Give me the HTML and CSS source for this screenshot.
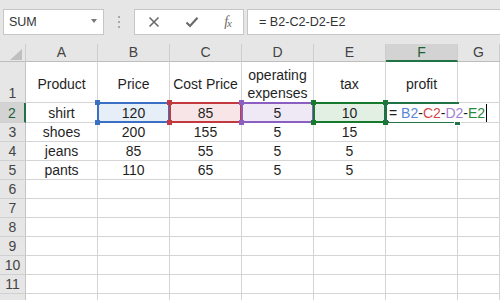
FILE: index.html
```html
<!DOCTYPE html>
<html>
<head>
<meta charset="utf-8">
<link rel="stylesheet" href="styles.css">
</head>
<body>
<div class="toolbar">
  <div class="namebox"><span>SUM</span><span class="caret"></span></div>
  <div class="grip"><i></i><i></i><i></i></div>
  <div class="fxbox">
    <svg class="ico" width="12" height="12" viewBox="0 0 12 12"><path d="M1.5 1.5L10.5 10.5M10.5 1.5L1.5 10.5" stroke="#6b6b6b" stroke-width="1.6" fill="none"/></svg>
    <svg class="ico" width="14" height="12" viewBox="0 0 14 12"><path d="M1.5 6.5L5 10L12.5 1.8" stroke="#6b6b6b" stroke-width="2.2" fill="none"/></svg>
    <span class="fx">f<span class="fxx">x</span></span>
  </div>
  <div class="formula">= B2-C2-D2-E2</div>
</div>
<div class="sheet">
  <div class="hd corner"><span class="tri"></span></div>
  <div class="hd col">A</div>
  <div class="hd col">B</div>
  <div class="hd col">C</div>
  <div class="hd col">D</div>
  <div class="hd col">E</div>
  <div class="hd col on">F</div>
  <div class="hd col">G</div>

  <div class="rh">1</div>
  <div class="c r1">Product</div>
  <div class="c r1">Price</div>
  <div class="c r1">Cost Price</div>
  <div class="c r1 wrap">operating expenses</div>
  <div class="c r1">tax</div>
  <div class="c r1">profit</div>
  <div class="c"></div>

  <div class="rh on">2</div>
  <div class="c">shirt</div>
  <div class="c ref blue">120<span class="sel"><i class="tl"></i><i class="tr"></i><i class="bl"></i><i class="br"></i></span></div>
  <div class="c ref red">85<span class="sel"><i class="tl"></i><i class="tr"></i><i class="bl"></i><i class="br"></i></span></div>
  <div class="c ref purple">5<span class="sel"><i class="tl"></i><i class="tr"></i><i class="bl"></i><i class="br"></i></span></div>
  <div class="c ref green">10<span class="sel"><i class="tl"></i><i class="tr"></i><i class="bl"></i><i class="br"></i></span></div>
  <div class="c act"><span class="abox"><i class="fh"></i></span><span class="edit">=&nbsp;<b class="fb">B2</b>-<b class="fc">C2</b>-<b class="fd">D2</b>-<b class="fe">E2</b></span></div>
  <div class="c"></div>

  <div class="rh">3</div>
  <div class="c">shoes</div><div class="c">200</div><div class="c">155</div><div class="c">5</div><div class="c">15</div><div class="c"></div><div class="c"></div>

  <div class="rh">4</div>
  <div class="c">jeans</div><div class="c">85</div><div class="c">55</div><div class="c">5</div><div class="c">5</div><div class="c"></div><div class="c"></div>

  <div class="rh">5</div>
  <div class="c">pants</div><div class="c">110</div><div class="c">65</div><div class="c">5</div><div class="c">5</div><div class="c"></div><div class="c"></div>

  <div class="rh">6</div>
  <div class="c"></div><div class="c"></div><div class="c"></div><div class="c"></div><div class="c"></div><div class="c"></div><div class="c"></div>
  <div class="rh">7</div>
  <div class="c"></div><div class="c"></div><div class="c"></div><div class="c"></div><div class="c"></div><div class="c"></div><div class="c"></div>
  <div class="rh">8</div>
  <div class="c"></div><div class="c"></div><div class="c"></div><div class="c"></div><div class="c"></div><div class="c"></div><div class="c"></div>
  <div class="rh">9</div>
  <div class="c"></div><div class="c"></div><div class="c"></div><div class="c"></div><div class="c"></div><div class="c"></div><div class="c"></div>
  <div class="rh">10</div>
  <div class="c"></div><div class="c"></div><div class="c"></div><div class="c"></div><div class="c"></div><div class="c"></div><div class="c"></div>
  <div class="rh">11</div>
  <div class="c"></div><div class="c"></div><div class="c"></div><div class="c"></div><div class="c"></div><div class="c"></div><div class="c"></div>
  <div class="rh"></div>
  <div class="c"></div><div class="c"></div><div class="c"></div><div class="c"></div><div class="c"></div><div class="c"></div><div class="c"></div>
</div>
</body>
</html>
```
FILE: styles.css
```css
* { box-sizing: border-box; }
html, body { margin: 0; padding: 0; }
body {
  width: 500px; height: 300px; overflow: hidden;
  font-family: "Liberation Sans", Arial, sans-serif;
  background: #fff; color: #1f1f1f;
}
.toolbar {
  height: 44px; background: #e6e6e6;
  display: flex; align-items: flex-start;
  padding: 9px 0 0 3px;
}
.namebox {
  width: 101px; height: 26px; background: #fff;
  border: 1px solid #c6c6c6;
  display: flex; align-items: center; justify-content: space-between;
  padding: 0 6px 0 5px;
  font-size: 12.5px; color: #333;
}
.caret {
  width: 0; height: 0;
  border-left: 3.5px solid transparent; border-right: 3.5px solid transparent;
  border-top: 4px solid #777; margin-top: -2px;
}
.grip {
  width: 30px; height: 26px;
  display: flex; flex-direction: column; align-items: center; justify-content: center; gap: 3px;
}
.grip i { width: 2px; height: 2px; background: #a8a8a8; display: block; }
.fxbox {
  width: 110px; height: 26px; background: #fff;
  border: 1px solid #c6c6c6;
  display: flex; align-items: center; justify-content: space-between;
  padding: 0 12px 0 13px;
}
.ico { display: block; }
.fx {
  font-family: "Liberation Serif", serif; font-style: italic;
  font-size: 14px; color: #6b6b6b; letter-spacing: -1px;
}
.fxx { font-size: 11px; position: relative; top: 1px; }
.formula {
  flex: 1; margin-left: 3px; height: 26px; background: #fff;
  border: 1px solid #c6c6c6; border-right: none;
  display: flex; align-items: center; padding-left: 11px;
  font-size: 12.6px; color: #333;
}
.sheet {
  display: grid;
  grid-template-columns: 26px repeat(6, 72px) 1fr;
  grid-template-rows: 18px 41px 20px repeat(10, 19px);
  font-size: 14px;
}
.hd {
  background: #e6e6e6;
  border-right: 1px solid #cdcdcd;
  border-bottom: 1px solid #bdbdbd;
  display: flex; align-items: center; justify-content: center;
  color: #444; line-height: 17px;
}
.hd.col.on { background: #d3d3d3; border-bottom: 2px solid #217346; color: #1e5e38; }
.corner { align-items: flex-end; justify-content: flex-end; padding: 0 3px 1px 0; }
.tri {
  width: 12px; height: 11px; background: #bfbfbf;
  clip-path: polygon(100% 0, 100% 100%, 0 100%);
}
.rh {
  background: #e6e6e6;
  border-right: 1px solid #c4c4c4;
  border-bottom: 1px solid #d0d0d0;
  display: flex; align-items: flex-end; justify-content: center;
  color: #444; line-height: 17px; padding-bottom: 0;
}
.rh.on { background: #d3d3d3; border-right: 2px solid #217346; color: #1e5e38; }
.c {
  border-right: 1px solid #d4d4d4;
  border-bottom: 1px solid #d4d4d4;
  display: flex; align-items: flex-end; justify-content: center;
  line-height: 17px; text-align: center; position: relative;
}
.c.r1 { align-items: center; padding-top: 5px; }
.c.wrap { line-height: 18px; padding-top: 3px; }
.ref.blue { background: #e6eef8; }
.ref.red { background: #f7e5e7; }
.ref.purple { background: #efe9f5; }
.ref.green { background: #e2efe3; }
.sel {
  position: absolute; left: -1px; top: -1px; right: -1px; bottom: -1px;
  border: 2px solid; z-index: 1;
}
.blue .sel { border-color: #3a6fc4; color: #3a6fc4; }
.red .sel { border-color: #c23a40; color: #c23a40; }
.purple .sel { border-color: #8b5ec2; color: #8b5ec2; }
.green .sel { border-color: #157a2c; color: #157a2c; }
.sel i {
  position: absolute; width: 5px; height: 5px; background: currentColor; display: block;
}
.sel .tl { left: -4px; top: -4px; }
.sel .tr { right: -4px; top: -4px; }
.sel .bl { left: -4px; bottom: -4px; }
.sel .br { right: -4px; bottom: -4px; }
.act { justify-content: flex-start; }
.abox {
  position: absolute; left: -2px; top: -1px; right: -2px; bottom: -1px;
  border-top: 2px solid #217346; border-bottom: 2px solid #217346;
  border-left: 3px solid #217346; z-index: 2;
}
.fh {
  position: absolute; right: -1px; bottom: -4px; width: 5px; height: 5px;
  background: #217346; display: block; box-shadow: 0 0 0 1px #fff;
}
.edit {
  position: absolute; left: 3px; top: 1px; bottom: 0; z-index: 3;
  background: #fff; white-space: nowrap;
  display: block; line-height: 17px; padding-top: 1px;
  border-right: 1px solid #000; padding-right: 1px;
  color: #1f1f1f;
}
.edit b { font-weight: normal; }
.fb { color: #5a86d8; }
.fc { color: #d5484c; }
.fd { color: #a47ed6; }
.fe { color: #2a8a3a; }
```
